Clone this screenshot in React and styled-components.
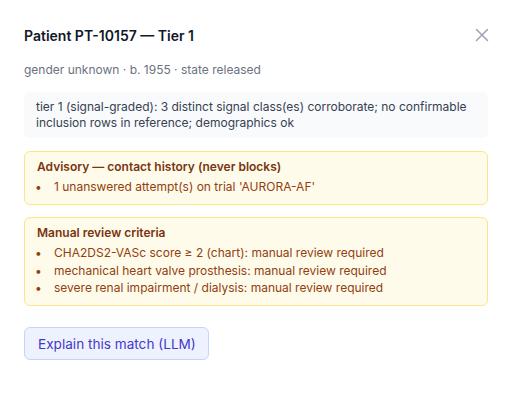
import React from "react";
import styled, { createGlobalStyle } from "styled-components";

const GlobalStyle = createGlobalStyle`
  body {
    margin: 0;
    background: #ffffff;
    font-family: Inter, "Liberation Sans", sans-serif;
  }
`;

const Panel = styled.div`
  width: 512px;
  height: 400px;
  box-sizing: border-box;
  padding: 24px 24px;
  display: flex;
  flex-direction: column;
`;

const Header = styled.div`
  display: flex;
  justify-content: space-between;
  align-items: center;
  height: 22px;
`;

const Title = styled.h2`
  margin: 0;
  font-size: 14px;
  font-weight: 600;
  color: #111827;
`;

const CloseButton = styled.button`
  border: none;
  background: none;
  padding: 0;
  margin-right: -1px;
  color: #9ca3af;
  display: flex;
  cursor: pointer;
`;

const Meta = styled.div`
  margin-top: 16px;
  font-size: 12px;
  line-height: 16px;
  color: #6b7280;
`;

const Summary = styled.div`
  margin-top: 14px;
  padding: 7px 12px;
  background: #f8fafc;
  border-radius: 6px;
  font-size: 12px;
  line-height: 16px;
  color: #374151;
`;

const Notice = styled.div`
  margin-top: 13px;
  padding: 7px 12px 8.5px;
  background: #fffbeb;
  border: 1px solid #fde68a;
  border-radius: 6px;
  color: #92400e;
  font-size: 12px;
  & + & {
    margin-top: 12px;
  }
`;

const NoticeTitle = styled.div`
  font-weight: 600;
  line-height: 16px;
  color: #78350f;
  margin-bottom: 3px;
`;

const List = styled.ul`
  margin: 0;
  padding: 0;
  list-style: none;
`;

const Item = styled.li`
  position: relative;
  padding-left: 17px;
  line-height: 17.5px;
  &:before {
    content: "•";
    position: absolute;
    left: -2px;
  }
`;

const ExplainButton = styled.button`
  align-self: flex-start;
  margin-top: 21px;
  height: 33px;
  padding: 0 12px 0 13px;
  background: #eef2ff;
  border: 1px solid #c7d2fe;
  border-radius: 6px;
  color: #4338ca;
  font-family: inherit;
  font-size: 13.6px;
  cursor: pointer;
`;

const notices = [
  {
    title: "Advisory — contact history (never blocks)",
    items: ["1 unanswered attempt(s) on trial 'AURORA-AF'"],
  },
  {
    title: "Manual review criteria",
    items: [
      "CHA2DS2-VASc score ≥ 2 (chart): manual review required",
      "mechanical heart valve prosthesis: manual review required",
      "severe renal impairment / dialysis: manual review required",
    ],
  },
];

const App = () => {
  return (
    <>
      <GlobalStyle />
      <Panel>
        <Header>
          <Title>Patient PT-10157 — Tier 1</Title>
          <CloseButton aria-label="Close">
            <svg width="14" height="14" viewBox="0 0 14 14" fill="none">
              <path d="M1.5 1.5l11 11M12.5 1.5l-11 11" stroke="currentColor" strokeWidth="1.5" strokeLinecap="round" />
            </svg>
          </CloseButton>
        </Header>
        <Meta>gender unknown · b. 1955 · state released</Meta>
        <Summary>
          tier 1 (signal-graded): 3 distinct signal class(es) corroborate; no confirmable inclusion rows in reference; demographics ok
        </Summary>
        {notices.map((n) => (
          <Notice key={n.title}>
            <NoticeTitle>{n.title}</NoticeTitle>
            <List>
              {n.items.map((it) => (
                <Item key={it}>{it}</Item>
              ))}
            </List>
          </Notice>
        ))}
        <ExplainButton>Explain this match (LLM)</ExplainButton>
      </Panel>
    </>
  );
};

export default App;
